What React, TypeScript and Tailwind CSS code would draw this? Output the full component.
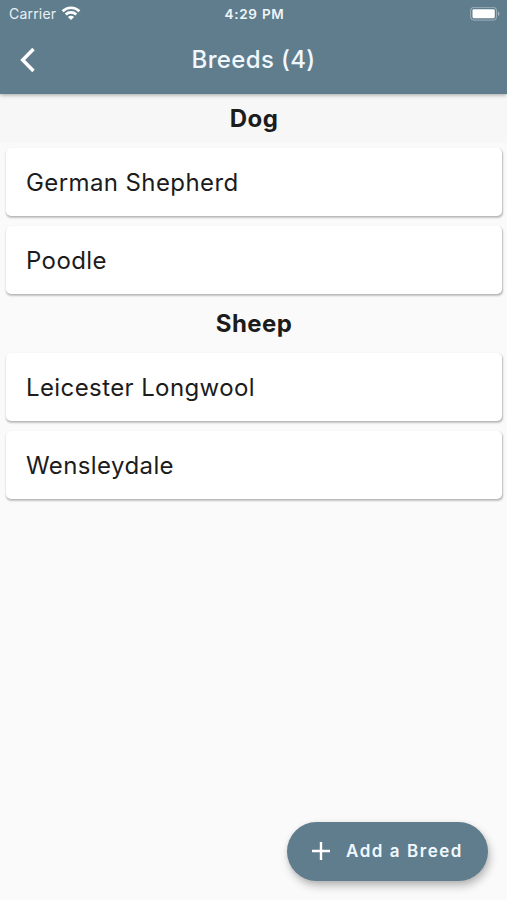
const groups = [
  { species: "Dog", headerClass: "bg-[#f7f7f7]", breeds: ["German Shepherd", "Poodle"] },
  { species: "Sheep", headerClass: "", breeds: ["Leicester Longwool", "Wensleydale"] },
];

function WifiIcon() {
  return (
    <svg width="20" height="15" viewBox="0 0 20 15" fill="none" stroke="white" strokeWidth="2.7">
      <path d="M1.6 5.2C6.3 .6 13.7 .6 18.4 5.2" />
      <path d="M4.7 8.5C7.7 5.7 12.3 5.7 15.3 8.5" />
      <path d="M10 13.9L6.9 10.9C8.7 9.3 11.3 9.3 13.1 10.9Z" fill="white" stroke="none" />
    </svg>
  );
}

function BatteryIcon() {
  return (
    <svg width="30" height="14" viewBox="0 0 30 14" fill="none">
      <rect x="0.6" y="0.3" width="26" height="12.8" rx="3.4" stroke="white" strokeOpacity="0.4" strokeWidth="1" />
      <rect x="2.5" y="2.2" width="22.3" height="9" rx="1.4" fill="white" />
      <path d="M28 4.5C30 5.5 30 7.9 28 8.9Z" fill="white" fillOpacity="0.45" />
    </svg>
  );
}

function StatusBar() {
  return (
    <div className="grid grid-cols-3 items-center h-[27px] pl-[9px] pr-[7px]">
      <div className="flex items-center gap-[5px]">
        <p className="text-[14px] leading-none tracking-[0.2px] text-[#e8f1f5]">Carrier</p>
        <WifiIcon />
      </div>
      <p className="text-[13.5px] leading-[15px] pt-px font-semibold tracking-[0.75px] text-center text-[#eef5f8]">4:29 PM</p>
      <div className="flex justify-end">
        <BatteryIcon />
      </div>
    </div>
  );
}

function BreedCard(props: { name: string }) {
  return (
    <div className="flex items-center h-[68px] ml-[6px] mr-[5px] pl-5 bg-white rounded-[5px] shadow-[0.5px_1.5px_2px_rgba(0,0,0,0.22),0.5px_1px_1px_rgba(0,0,0,0.06)]">
      <p className="text-[24px] leading-none pt-px tracking-[0.4px] text-[#1c1c1c]">{props.name}</p>
    </div>
  );
}

function App() {
  return (
    <div className="flex flex-col w-full h-screen bg-[#fafafa] font-['Inter','Liberation_Sans',sans-serif] overflow-hidden">

      <header className="relative h-[94px] shrink-0 bg-[#607d8d] shadow-[0_1px_4px_rgba(0,0,0,0.35)]">
        <StatusBar />
        <div className="grid grid-cols-[60px_1fr_60px] items-center h-[66px]">
          <button className="pl-[20px]">
            <svg width="16" height="26" viewBox="0 0 16 26" fill="none" stroke="white" strokeWidth="3.5">
              <path d="M13.5 2L2.7 13L13.5 24" />
            </svg>
          </button>
          <h1 className="text-[24px] leading-none font-medium tracking-[0.35px] text-center text-[#f0f8ff]">Breeds (4)</h1>
        </div>
      </header>

      <main className="flex-1">
        {groups.map((group) => (
          <section key={group.species}>
            <h2 className={`flex items-center justify-center h-[49px] pl-px text-[24px] leading-none font-bold tracking-[0.4px] text-[#1c1c1c] ${group.headerClass}`}>
              {group.species}
            </h2>
            <div className="flex flex-col gap-[10px] py-[5px]">
              {group.breeds.map((breed) => (
                <BreedCard key={breed} name={breed} />
              ))}
            </div>
          </section>
        ))}
      </main>

      <button className="flex items-center self-end shrink-0 w-[201px] h-[59px] mr-[19px] mb-[19px] pl-[25px] gap-[16px] rounded-full bg-[#607d8d] text-[#f0f8ff] shadow-[2px_5px_8px_rgba(0,0,0,0.25),0_1px_4px_rgba(0,0,0,0.08)]">
        <svg width="18" height="19" viewBox="0 0 18 19" fill="none" stroke="white" strokeWidth="2.4">
          <path d="M9 0V18M0 9H18" />
        </svg>
        <span className="text-[17px] leading-none font-semibold tracking-[1.55px] whitespace-nowrap">Add a Breed</span>
      </button>

    </div>
  );
}

export default App;
